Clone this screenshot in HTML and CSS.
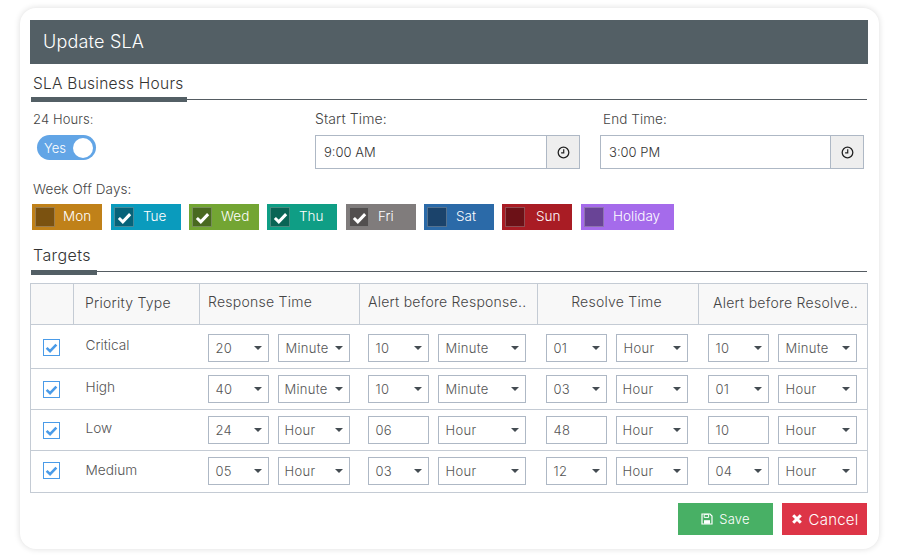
FILE: index.html
```html
<!DOCTYPE html>
<html lang="en">
<head>
<meta charset="utf-8">
<title>Update SLA</title>
<link rel="stylesheet" href="styles.css">
</head>
<body>
<svg class="defs" width="0" height="0" aria-hidden="true">
  <symbol id="tick" viewBox="0 0 16 16"><path d="M2 8.5 6.2 12.6 14 4.4" fill="none" stroke="currentColor" stroke-width="3.2"/></symbol>
  <symbol id="clock" viewBox="0 0 12 12"><circle cx="6" cy="6" r="4.9" fill="none" stroke="currentColor" stroke-width="1.2"/><path d="M6.2 3v3.3H3.8" fill="none" stroke="currentColor" stroke-width="1.1"/></symbol>
</svg>
<main class="card">
  <h1 class="title">Update SLA</h1>

  <section class="sec-hours">
    <div class="sec-head"><h2 class="sec-title sec-title-hours">SLA Business Hours</h2></div>
    <div class="time-row">
      <div class="field field-24">
        <label class="label">24 Hours:</label>
        <div class="toggle"><span>Yes</span><i class="knob"></i></div>
      </div>
      <div class="field field-start">
        <label class="label label-start">Start Time:</label>
        <div class="time-input"><span class="time-value">9:00 AM</span><span class="addon"><svg class="clock"><use href="#clock"/></svg></span></div>
      </div>
      <div class="field field-end">
        <label class="label label-end">End Time:</label>
        <div class="time-input"><span class="time-value">3:00 PM</span><span class="addon"><svg class="clock"><use href="#clock"/></svg></span></div>
      </div>
    </div>
    <div class="label label-week">Week Off Days:</div>
    <div class="chips">
      <div class="chip mon"><span class="box"></span>Mon</div>
      <div class="chip tue"><span class="box"><svg class="tick"><use href="#tick"/></svg></span>Tue</div>
      <div class="chip wed"><span class="box"><svg class="tick"><use href="#tick"/></svg></span>Wed</div>
      <div class="chip thu"><span class="box"><svg class="tick"><use href="#tick"/></svg></span>Thu</div>
      <div class="chip fri"><span class="box"><svg class="tick"><use href="#tick"/></svg></span>Fri</div>
      <div class="chip sat"><span class="box"></span>Sat</div>
      <div class="chip sun"><span class="box"></span>Sun</div>
      <div class="chip holiday"><span class="box"></span>Holiday</div>
    </div>
  </section>

  <section class="sec-targets">
    <div class="sec-head"><h2 class="sec-title sec-title-targets">Targets</h2></div>
    <table class="grid">
      <thead>
        <tr>
          <th class="c1"></th>
          <th class="c2 th-priority">Priority Type</th>
          <th class="c3">Response Time</th>
          <th class="c4">Alert before Response..</th>
          <th class="c5 th-center">Resolve Time</th>
          <th class="c6 th-last">Alert before Resolve..</th>
        </tr>
      </thead>
      <tbody>
        <tr class="row-critical">
          <td class="cb-cell"><span class="cb"><svg class="tick"><use href="#tick"/></svg></span></td>
          <td class="name">Critical</td>
          <td><div class="pair"><div class="sel w61">20</div><div class="sel w72">Minute</div></div></td>
          <td><div class="pair"><div class="sel w61">10</div><div class="sel w88">Minute</div></div></td>
          <td><div class="pair"><div class="sel w61">01</div><div class="sel w72">Hour</div></div></td>
          <td class="last"><div class="pair"><div class="sel w61">10</div><div class="sel w79">Minute</div></div></td>
        </tr>
        <tr class="row-high">
          <td class="cb-cell"><span class="cb"><svg class="tick"><use href="#tick"/></svg></span></td>
          <td class="name">High</td>
          <td><div class="pair"><div class="sel w61">40</div><div class="sel w72">Minute</div></div></td>
          <td><div class="pair"><div class="sel w61">10</div><div class="sel w88">Minute</div></div></td>
          <td><div class="pair"><div class="sel w61">03</div><div class="sel w72">Hour</div></div></td>
          <td class="last"><div class="pair"><div class="sel w61">01</div><div class="sel w79">Hour</div></div></td>
        </tr>
        <tr class="row-low">
          <td class="cb-cell"><span class="cb"><svg class="tick"><use href="#tick"/></svg></span></td>
          <td class="name">Low</td>
          <td><div class="pair"><div class="sel w61">24</div><div class="sel w72">Hour</div></div></td>
          <td><div class="pair"><div class="sel w61 plain">06</div><div class="sel w88">Hour</div></div></td>
          <td><div class="pair"><div class="sel w61 plain">48</div><div class="sel w72">Hour</div></div></td>
          <td class="last"><div class="pair"><div class="sel w61 plain">10</div><div class="sel w79">Hour</div></div></td>
        </tr>
        <tr class="row-medium">
          <td class="cb-cell"><span class="cb"><svg class="tick"><use href="#tick"/></svg></span></td>
          <td class="name">Medium</td>
          <td><div class="pair"><div class="sel w61">05</div><div class="sel w72">Hour</div></div></td>
          <td><div class="pair"><div class="sel w61">03</div><div class="sel w88">Hour</div></div></td>
          <td><div class="pair"><div class="sel w61">12</div><div class="sel w72">Hour</div></div></td>
          <td class="last"><div class="pair"><div class="sel w61">04</div><div class="sel w79">Hour</div></div></td>
        </tr>
      </tbody>
    </table>
  </section>

  <div class="actions">
    <button class="btn save" type="button">
      <svg class="btn-icon" viewBox="0 0 12 12"><path d="M1 1h8l2 2v8H1z" fill="none" stroke="currentColor" stroke-width="1.2"/><path d="M3.2 1.4h4.4v3H3.2z" fill="none" stroke="currentColor" stroke-width="1"/><path d="M3 7.2h6v3.6H3z" fill="currentColor"/></svg>
      Save
    </button>
    <button class="btn cancel" type="button">
      <svg class="btn-icon" viewBox="0 0 12 12"><path d="M2.2 2.2 9.8 9.8M9.8 2.2 2.2 9.8" fill="none" stroke="currentColor" stroke-width="3"/></svg>
      Cancel
    </button>
  </div>
</main>
</body>
</html>
```

FILE: styles.css
```css
* { box-sizing: border-box; }
html, body { margin: 0; padding: 0; }
body {
  width: 900px;
  height: 559px;
  background: #fff;
  font-family: Inter, "Noto Sans", sans-serif;
  font-weight: 300;
  font-size: 13px;
  color: #444;
  overflow: hidden;
}
.defs { position: absolute; }

.card {
  width: 859px;
  height: 541px;
  margin: 8px 0 0 20px;
  padding: 12px 11px 0 10px;
  background: #fff;
  border-radius: 16px;
  box-shadow: 0 0 6px rgba(0, 0, 0, .14);
}

.title {
  margin: 0;
  height: 44px;
  padding-left: 13px;
  background: #535f65;
  color: #fff;
  font-size: 18px;
  font-weight: 300;
  line-height: 44px;
  letter-spacing: .2px;
}

.sec-head {
  margin-left: 1px;
  margin-right: 1px;
  border-bottom: 1px solid #555c62;
  height: 36px;
}
.sec-title {
  display: inline-block;
  height: 38px;
  margin: 0;
  padding-left: 2px;
  border-bottom: 5px solid #535f65;
  font-size: 15.5px;
  font-weight: 300;
  color: #333;
  line-height: 39px;
  letter-spacing: .25px;
  white-space: nowrap;
}
.sec-title-hours { width: 156px; }
.sec-title-targets {
  width: 66px;
  font-size: 16px;
  line-height: 37px;
  letter-spacing: .4px;
}

.time-row {
  display: flex;
  height: 70px;
  padding-top: 10px;
}
.field-24 { width: 285px; }
.field-start { width: 285px; padding-right: 20px; }
.field-end { width: 264px; }

.label {
  display: block;
  font-size: 13px;
  line-height: 18px;
  color: #444;
  letter-spacing: .1px;
}
.field-24 .label { padding-left: 3px; }
.label-start { font-size: 14px; }
.label-end { padding-left: 3px; font-size: 13.5px; }
.label-week {
  padding-left: 3px;
  margin-top: 10px;
  font-size: 13.5px;
}

.toggle {
  display: flex;
  align-items: center;
  justify-content: space-between;
  width: 59px;
  height: 25px;
  margin: 7px 0 0 7px;
  padding: 0 3px 0 7px;
  border-radius: 13px;
  background: #62a5e6;
  color: #fff;
  font-size: 13px;
}
.knob {
  width: 20px;
  height: 20px;
  border-radius: 50%;
  background: #fff;
}

.time-input {
  display: flex;
  height: 34px;
  margin-top: 7px;
  border: 1px solid #aeb8c5;
  background: #fff;
}
.time-value {
  flex: 1;
  padding-left: 8px;
  font-size: 13px;
  line-height: 32px;
  color: #333;
}
.addon {
  display: flex;
  align-items: center;
  justify-content: center;
  width: 33px;
  border-left: 1px solid #aeb8c5;
  background: #eee;
}
.clock { width: 13px; height: 13px; color: #222; }

.chips {
  display: flex;
  margin: 6px 0 0 2px;
}
.chip {
  display: flex;
  align-items: center;
  width: 70px;
  height: 26px;
  margin-right: 9px;
  padding: 0 0 2px 3px;
  color: #fff;
  font-size: 13.5px;
  font-weight: 300;
}
.box {
  display: flex;
  align-items: center;
  justify-content: center;
  width: 20px;
  height: 20px;
  margin: 2px 9px 0 0;
  background: rgba(0, 0, 0, .36);
  border: 1px solid rgba(255, 255, 255, .25);
}
.box .tick { width: 15px; height: 15px; color: #fff; }
.mon { background: #c08119; }
.mon .box { margin-right: 8px; }
.tue { background: #0a9bbd; margin-right: 8px; }
.wed { background: #73a533; margin-right: 8px; }
.thu { background: #0f9e85; }
.fri { background: #807c7c; margin-right: 8px; }
.sat { background: #2b6aa8; margin-right: 8px; }
.sun { background: #a91c24; }
.sun .box { margin-right: 11px; }
.holiday { background: #a56beb; width: 93px; margin-right: 0; }

.sec-targets { margin-top: 7px; }
.sec-targets .sec-head { height: 35px; }

.grid {
  width: 837px;
  margin-top: 11px;
  table-layout: fixed;
  border-collapse: collapse;
  border: 1px solid #c4cbd4;
}
.grid th {
  height: 41px;
  padding: 0 0 5px 8px;
  background: #f8f8f8;
  border: 1px solid #c4cbd4;
  font-size: 14px;
  font-weight: 300;
  color: #444;
  text-align: left;
  letter-spacing: .25px;
  white-space: nowrap;
  overflow: hidden;
}
.c1 { width: 43px; }
.c2 { width: 126px; }
.c3 { width: 160px; }
.c4 { width: 178px; }
.c5 { width: 161px; }
.c6 { width: 169px; }
.grid .th-priority { padding-left: 11px; padding-bottom: 3px; }
.grid .th-center { text-align: center; padding: 0 3px 5px 0; }
.grid .th-last { padding-left: 14px; padding-bottom: 3px; }

.grid td {
  height: 41px;
  padding: 0 0 0 8px;
  border-top: 1px solid #c4cbd4;
  border-bottom: 1px solid #c4cbd4;
}
.row-critical td { height: 44px; padding-top: 3px; }
.row-medium td { height: 42px; padding-bottom: 1px; }
.grid td.last { padding-left: 9px; }
.grid td.cb-cell { padding-left: 12px; }
.row-critical td.cb-cell { padding-top: 2px; }
.row-medium td.cb-cell { padding-bottom: 3px; }
.grid td.name { padding-left: 12px; padding-bottom: 3px; color: #555; font-size: 13.7px; }
.row-critical td.name { padding-top: 0; }
.row-high td.name, .row-low td.name { padding-bottom: 5px; }

.cb {
  display: flex;
  align-items: center;
  justify-content: center;
  width: 17px;
  height: 17px;
  border: 1px solid #4a9be8;
  background: #fff;
}
.cb .tick { width: 13px; height: 13px; color: #4a9be8; }

.pair {
  display: flex;
  gap: 9px;
}
.sel {
  position: relative;
  height: 28px;
  padding-left: 7px;
  border: 1px solid #aeb8c5;
  background: #fff;
  font-size: 13px;
  line-height: 26px;
  color: #555;
  letter-spacing: .3px;
}
.sel::after {
  content: "";
  position: absolute;
  top: 11px;
  right: 6px;
  border-style: solid;
  border-width: 4px 4px 0;
  border-color: #444c52 transparent transparent;
}
.sel.plain::after { display: none; }
.w61 { width: 61px; }
.w72 { width: 72px; padding-left: 6px; }
.row-critical .w72 { padding-left: 7px; }
.w88 { width: 88px; }
.w79 { width: 79px; }

.actions {
  display: flex;
  justify-content: flex-end;
  gap: 9px;
  margin: 10px 1px 0 0;
}
.btn {
  display: flex;
  align-items: center;
  justify-content: center;
  height: 32px;
  padding: 0;
  border: 0;
  color: #fff;
  font-family: inherit;
  font-weight: 300;
  font-size: 13px;
  letter-spacing: .2px;
}
.btn-icon { width: 12px; height: 12px; margin-right: 6px; }
.save { width: 95px; background: #48b065; }
.cancel { width: 85px; background: #dd3547; font-size: 15px; }
```
